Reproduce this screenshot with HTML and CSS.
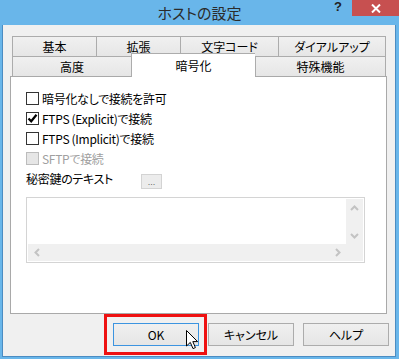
FILE: index.html
```html
<!DOCTYPE html>
<html lang="ja">
<head>
<meta charset="utf-8">
<title>ホストの設定</title>
<link rel="stylesheet" href="styles.css">
</head>
<body>
<div class="window">
  <div class="titlebar">
    <div></div>
    <div class="title">ホストの設定</div>
    <div class="controls">
      <span class="help">?</span>
      <span class="close"><svg width="10" height="9" viewBox="0 0 10 9"><path d="M1 0.5 L9 8.5 M9 0.5 L1 8.5" stroke="#fff" stroke-width="2"/></svg></span>
    </div>
  </div>
  <div class="client">
    <div class="tabs">
      <div class="tabrow row1">
        <div class="tab">基本</div>
        <div class="tab">拡張</div>
        <div class="tab">文字コード</div>
        <div class="tab">ダイアルアップ</div>
      </div>
      <div class="tabrow row2">
        <div class="tab">高度</div>
        <div class="tab sel">暗号化</div>
        <div class="tab">特殊機能</div>
      </div>
    </div>
    <div class="panel">
      <div class="opt"><span class="cb"></span><span>暗号化なしで接続を許可</span></div>
      <div class="opt"><span class="cb"><svg width="11" height="11" viewBox="0 0 11 11"><path d="M1.5 5.5 L4.2 8.3 L9.5 1.8" fill="none" stroke="#000" stroke-width="2.2"/></svg></span><span>FTPS (Explicit)で接続</span></div>
      <div class="opt"><span class="cb"></span><span>FTPS (Implicit)で接続</span></div>
      <div class="opt dis"><span class="cb"></span><span>SFTPで接続</span></div>
      <div class="keyrow"><span class="keylabel">秘密鍵のテキスト</span><span class="dots">...</span></div>
      <div class="textbox">
        <div class="area"></div>
        <div class="vscroll">
          <span class="arr"><svg width="9" height="6" viewBox="0 0 9 6"><path d="M1 5 L4.5 1.5 L8 5" fill="none" stroke="#c3c3c3" stroke-width="2"/></svg></span>
          <span class="arr"><svg width="9" height="6" viewBox="0 0 9 6"><path d="M1 1 L4.5 4.5 L8 1" fill="none" stroke="#c3c3c3" stroke-width="2"/></svg></span>
        </div>
        <div class="hscroll">
          <span class="arr"><svg width="6" height="9" viewBox="0 0 6 9"><path d="M5 1 L1.5 4.5 L5 8" fill="none" stroke="#c3c3c3" stroke-width="2"/></svg></span>
          <span class="arr"><svg width="6" height="9" viewBox="0 0 6 9"><path d="M1 1 L4.5 4.5 L1 8" fill="none" stroke="#c3c3c3" stroke-width="2"/></svg></span>
        </div>
        <div class="corner"></div>
      </div>
    </div>
    <div class="buttons">
      <div class="btn def">OK</div>
      <div class="btn">キャンセル</div>
      <div class="btn">ヘルプ</div>
    </div>
  </div>
  <div class="highlight"></div>
  <svg class="cursor" width="13" height="20" viewBox="0 0 13 20"><path d="M0.5 0.5 L0.5 16 L4.3 12.4 L7 18.6 L9.4 17.6 L6.8 11.6 L11.6 11.6 Z" fill="#fff" stroke="#000" stroke-width="1" stroke-linejoin="round"/></svg>
</div>
</body>
</html>
```

FILE: styles.css
```css
body {
  margin: 0;
}

.window {
  position: relative;
  width: 399px;
  height: 359px;
  background: #69b6ea;
  display: flex;
  flex-direction: column;
  font-family: "Noto Sans CJK JP", sans-serif;
  font-size: 12px;
  font-feature-settings: "palt";
  color: #000;
  overflow: hidden;
}

.titlebar {
  height: 25px;
  flex: none;
  display: grid;
  grid-template-columns: 1fr auto 1fr;
}

.title {
  font-size: 15px;
  line-height: 25px;
  color: #2b2b2b;
}

.controls {
  justify-self: end;
  display: flex;
  align-items: flex-start;
}

.help {
  font-family: "Liberation Sans", sans-serif;
  font-weight: bold;
  font-size: 13px;
  line-height: 14px;
  color: #222;
  margin-right: 10px;
}

.close {
  width: 47px;
  height: 16px;
  background: #c75050;
  display: flex;
  align-items: center;
  justify-content: center;
}

.client {
  flex: 1;
  margin: 0 3px 2px 2px;
  border: 1px solid #4b8cc2;
  border-top: none;
  background: #f0f0f0;
  padding: 11px 0 0 7px;
  display: flex;
  flex-direction: column;
}

.tabs {
  position: relative;
  z-index: 1;
  width: 377px;
  box-sizing: border-box;
  padding: 0 1px 0 2px;
}

.tabrow {
  display: grid;
  align-items: start;
}

.row1 {
  grid-template-columns: 84px 84px 98px 108px;
}

.row2 {
  grid-template-columns: 119px 124px 131px;
}

.tab {
  height: 20px;
  box-sizing: border-box;
  border-top: 1px solid #acacac;
  border-left: 1px solid #acacac;
  background: linear-gradient(#f0f0f0, #e6e6e6);
  text-align: center;
  line-height: 19px;
  white-space: nowrap;
}

.tab:last-child {
  border-right: 1px solid #acacac;
}

.tab.sel {
  position: relative;
  z-index: 2;
  height: 24px;
  margin-top: -3px;
  margin-bottom: -1px;
  background: #fff;
  line-height: 23px;
}

.panel {
  width: 377px;
  height: 238px;
  box-sizing: border-box;
  border: 1px solid #a9a9a9;
  background: #fff;
  padding: 11px 15px 0;
  letter-spacing: -0.3px;
}

.opt {
  height: 20px;
  display: flex;
  align-items: center;
  gap: 3px;
}

.cb {
  width: 13px;
  height: 13px;
  box-sizing: border-box;
  border: 1px solid #333;
  background: #fff;
  display: flex;
  align-items: center;
  justify-content: center;
}

.opt.dis {
  color: #a0a0a0;
}

.opt.dis .cb {
  border-color: #bcbcbc;
  background: #e6e6e6;
}

.keyrow {
  height: 20px;
  display: flex;
  align-items: center;
}

.keylabel {
  width: 115px;
}

.dots {
  align-self: flex-start;
  margin-top: 6px;
  width: 21px;
  height: 15px;
  box-sizing: border-box;
  border: 1px solid #d3d3d3;
  background: #ececec;
  color: #666;
  font-family: "Liberation Sans", sans-serif;
  font-size: 9px;
  line-height: 15px;
  text-align: center;
  letter-spacing: 0;
}

.textbox {
  margin-top: 9px;
  width: 339px;
  height: 66px;
  box-sizing: border-box;
  border: 1px solid #d4d4d4;
  padding: 1px;
  background: #fff;
  display: grid;
  grid-template-columns: 1fr 17px;
  grid-template-rows: 1fr 17px;
}

.vscroll {
  background: #f0f0f0;
  display: flex;
  flex-direction: column;
  justify-content: space-between;
}

.hscroll {
  background: #f0f0f0;
  display: flex;
  justify-content: space-between;
}

.corner {
  background: #f0f0f0;
}

.arr {
  width: 17px;
  height: 17px;
  display: flex;
  align-items: center;
  justify-content: center;
}

.buttons {
  margin-top: 9px;
  padding-right: 6px;
  display: flex;
  justify-content: flex-end;
  gap: 9px;
}

.btn {
  width: 86px;
  height: 23px;
  box-sizing: border-box;
  border: 1px solid #acacac;
  background: linear-gradient(#f0f0f0, #e5e5e5);
  display: flex;
  align-items: center;
  justify-content: center;
}

.btn.def {
  border-color: #3c94e0;
}

.highlight {
  position: absolute;
  left: 104px;
  top: 314px;
  width: 103px;
  height: 41px;
  box-sizing: border-box;
  border: 3px solid #ee1111;
}

.cursor {
  position: absolute;
  left: 186px;
  top: 330px;
}
```
